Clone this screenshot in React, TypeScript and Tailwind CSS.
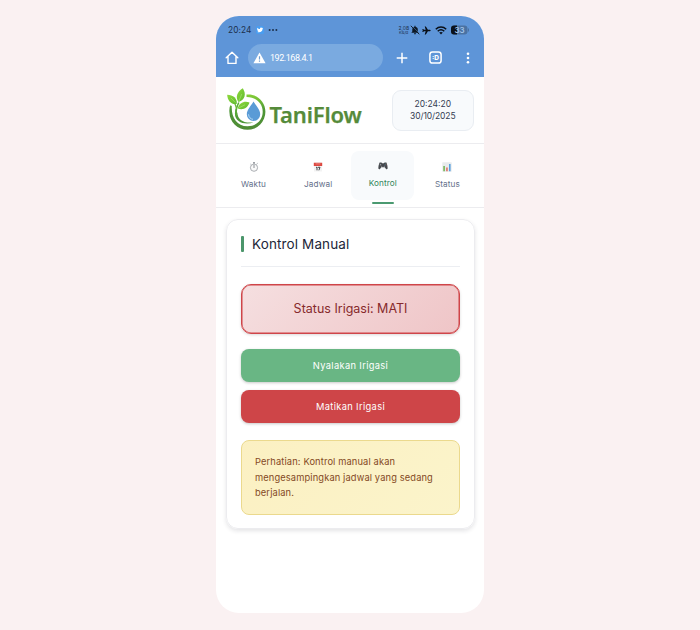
import React from "react";

const Logo = () => (
  <svg width="40" height="44" viewBox="0 0 40 44" fill="none">
    <defs>
      <linearGradient id="ring" x1="0" y1="0" x2="0" y2="1">
        <stop offset="0" stopColor="#86d038" />
        <stop offset="0.45" stopColor="#4d9637" />
        <stop offset="1" stopColor="#4f8b35" />
      </linearGradient>
      <linearGradient id="leaf" x1="0" y1="0" x2="1" y2="1">
        <stop offset="0" stopColor="#8fda3c" />
        <stop offset="1" stopColor="#5fb92f" />
      </linearGradient>
    </defs>
    <path d="M19.500 6.600C30 5.500 38.400 13.500 38.400 23.700A18 18 0 0 1 2.400 24C2.200 21.200 2.500 19 3.300 17.200L4.800 18C4.200 29 9.500 38.200 20.500 38.200C29.500 38.200 35.700 32 35.700 23.700C35.700 15.200 29 8.800 19.500 9Z" fill="url(#ring)" />
    <path d="M10.400 25C10.800 31.500 16 35.500 26.500 34.400C18.500 37.200 8 34.800 7.900 25.500L8.400 20.500Z" fill="#4f9838" />
    <path d="M9.300 28C8.500 24 9.200 19.500 11.800 14.500" stroke="#59ac35" strokeWidth="1.600" />
    <path d="M9.500 21C9 18.500 8.500 17 7.500 14.500" stroke="#69b936" strokeWidth="1.200" />
    <path d="M11.600 14C7.700 9.500 10.500 3.200 15.800 0.300C19.500 6 18 12 11.600 14Z" fill="url(#leaf)" />
    <path d="M9.700 16C4.500 17 0.400 12.700 0.200 6.800C6 7 10.600 10.500 9.700 16Z" fill="url(#leaf)" />
    <path d="M10.800 20.500C12 14.700 17.500 12.700 22.500 14.500C20.700 20 16 22.400 10.800 20.500Z" fill="url(#leaf)" />
    <path d="M11.900 13L14.800 6M8.300 14.500L4 10M12 19.800L18 16.800" stroke="#c9f0a0" strokeWidth="0.400" />
    <path d="M26.500 13.500C24.300 17.500 19.800 21.700 19.800 26.300A6.700 6.700 0 0 0 33.200 26.300C33.200 21.700 28.700 17.500 26.500 13.500Z" fill="#5a9bd6" />
    <path d="M21.500 26.300C21.800 29.300 23.600 31.100 26 31.300" stroke="#b8dcf5" strokeWidth="0.900" />
  </svg>
);

const StopwatchIcon = () => (
  <svg width="10" height="10" viewBox="0 0 10 10" fill="none">
    <circle cx="5" cy="5.700" r="3.600" fill="#fafafa" stroke="#a2a6aa" strokeWidth="0.900" />
    <path d="M5 3V6M4 0.700H6M5 0.700V2M7.600 2.200L8.500 1.400M1.600 2.200L2.200 2.700" stroke="#81878d" strokeWidth="0.900" />
  </svg>
);

const CalendarIcon = () => (
  <svg width="10" height="10" viewBox="0 0 10 10">
    <rect x="1" y="0.500" width="8" height="9" rx="0.600" fill="#f3f3f3" />
    <path d="M0.800 0.700H9.200V4H0.800Z" fill="#dc4840" />
    <path d="M2.600 1.900H7.400" stroke="#f3a29c" strokeWidth="0.700" />
    <path d="M3.100 5.500L4 5V8.300M5 5.300H7L5.900 8.300" stroke="#303438" strokeWidth="0.900" fill="none" />
  </svg>
);

const GamepadIcon = () => (
  <svg width="10" height="10" viewBox="0 0 10 10">
    <path d="M1.600 1.600H3.500L4 2.200H6L6.500 1.600H8.400C9.200 3.500 9.800 6 9.600 7.600C9.400 8.700 8.400 8.500 7.800 7.700L6.800 6.200H3.200L2.200 7.700C1.600 8.500 0.600 8.700 0.400 7.600C0.200 6 0.800 3.500 1.600 1.600Z" fill="#45484d" />
    <path d="M1.700 3.700H3.300M2.500 2.900V4.500" stroke="#b7babd" strokeWidth="0.500" />
    <circle cx="7.500" cy="3" r="0.450" fill="#61a47b" />
    <circle cx="8.300" cy="3.900" r="0.450" fill="#cf6863" />
    <circle cx="7" cy="4" r="0.450" fill="#6591d0" />
    <circle cx="3.700" cy="5.300" r="0.650" fill="#85898d" />
    <circle cx="6.300" cy="5.300" r="0.650" fill="#85898d" />
  </svg>
);

const ChartIcon = () => (
  <svg width="10" height="10" viewBox="0 0 10 10">
    <rect x="0.300" y="0.300" width="9.400" height="9.400" rx="0.400" fill="#e8ebed" />
    <path d="M1.300 4H2.900V9.200H1.300Z" fill="#76b556" />
    <path d="M4.200 5.500H5.700V9.200H4.200Z" fill="#df6a5d" />
    <path d="M7 2H8.600V9.200H7Z" fill="#5aa2e0" />
  </svg>
);

const tabs = [
  { label: "Waktu", Icon: StopwatchIcon, active: false },
  { label: "Jadwal", Icon: CalendarIcon, active: false },
  { label: "Kontrol", Icon: GamepadIcon, active: true },
  { label: "Status", Icon: ChartIcon, active: false },
];

const StatusBar = () => (
  <div className="flex h-[28px] items-center pl-[12px] pr-[15.500px] text-[#1c304c]">
    <span className="text-[8.300px] tracking-[0.100px]">20:24</span>
    <svg className="ml-[4.500px]" width="8" height="8" viewBox="0 0 8 8">
      <rect width="8" height="8" rx="1.500" fill="#4a9df0" />
      <path d="M1.200 1.800C2 2.700 2.900 3 3.900 3C3.800 1.500 5.400 1 6.200 2L7.200 1.800L6.600 2.800C6.600 5.500 4.200 7 1.100 6L2.500 5.500C1.500 5 1 3.500 1.200 1.800Z" fill="white" />
    </svg>
    <svg className="ml-[4px]" width="10" height="4" viewBox="0 0 10 4" fill="#1c304c">
      <circle cx="1.600" cy="2" r="1" />
      <circle cx="5" cy="2" r="1" />
      <circle cx="8.400" cy="2" r="1" />
    </svg>
    <div className="ml-auto flex items-center">
      <div className="flex flex-col items-center text-[5px] leading-[5px]">
        <span>2,08</span>
        <span className="text-[4px] leading-[4px]">KB/d</span>
      </div>
      <svg className="ml-[1px]" width="10" height="10" viewBox="0 0 10 10">
        <path d="M1.300 7.800L2.300 6.500V4.500C2.300 2.800 3.500 1.900 4.500 1.700V0.800H5.500V1.700C7 2 7.800 3.200 7.800 4.500V6.500L8.800 7.800ZM3.900 8.300H6.100A1.100 1.100 0 0 1 3.900 8.300Z" fill="#0d1824" />
        <path d="M1.800 0.900L9.600 8.400" stroke="#5e95d6" strokeWidth="0.500" />
        <path d="M0.800 0.800L9.300 9.300" stroke="#0d1824" strokeWidth="0.900" />
      </svg>
      <svg className="ml-[2px]" width="9" height="9" viewBox="0 0 9 9">
        <path d="M8.700 4.500C8.700 4 8.100 3.800 7.600 3.800H5.900L3.900 0.600H2.700L3.700 3.800H1.900L1.200 3H0.300L0.800 4.500L0.300 6H1.200L1.900 5.200H3.700L2.700 8.400H3.900L5.900 5.200H7.600C8.100 5.200 8.700 5 8.700 4.500Z" fill="#091019" />
      </svg>
      <svg className="ml-[4px]" width="12" height="9" viewBox="0 0 12 9" fill="none" stroke="#091019">
        <path d="M0.800 3.200C3.800 0.300 8.200 0.300 11.200 3.200M2.700 5.200C4.700 3.400 7.300 3.400 9.300 5.200" strokeWidth="1.500" />
        <path d="M4.200 6.600Q6 5.300 7.800 6.600L6 8.600Z" fill="#091019" stroke="none" />
      </svg>
      <svg className="ml-[3.500px]" width="18" height="10" viewBox="0 0 18 10">
        <rect x="0" y="0.500" width="16.500" height="9" rx="3" fill="#4a72a2" />
        <path d="M3 0.500H6V9.500H3A3 3 0 0 1 0 6.500V3.500A3 3 0 0 1 3 0.500Z" fill="#0b121b" />
        <rect x="17" y="3.500" width="1" height="3" fill="#4a72a2" />
        <text x="8.500" y="7.900" textAnchor="middle" fontSize="8" fontWeight="600" fill="#9fc1e8">33</text>
      </svg>
    </div>
  </div>
);

const BrowserBar = () => (
  <div className="flex h-[27px] items-center">
    <svg className="ml-[9px]" width="14" height="14" viewBox="0 0 14 14" fill="none" stroke="white" strokeWidth="1.400">
      <path d="M1.200 6.700L7 1.300L12.800 6.700M3 5.500V12.400H11V5.500" strokeLinejoin="round" strokeLinecap="round" />
    </svg>
    <div className="ml-[9px] flex h-[27px] w-[134.500px] items-center rounded-full bg-[#7aaae0] pl-[4.500px]">
      <svg width="13" height="12" viewBox="0 0 13 12">
        <path d="M6.500 0.500L12.600 11.200H0.400Z" fill="white" />
        <path d="M6.500 4.300V7.500M6.500 8.600V9.800" stroke="#719fd2" strokeWidth="1.200" />
      </svg>
      <span className="ml-[4.500px] pt-[2px] font-['Roboto',sans-serif] text-[9px] tracking-[-0.450px] text-white">192.168.4.1</span>
    </div>
    <svg className="ml-[13px]" width="12" height="12" viewBox="0 0 12 12" stroke="white" strokeWidth="1.500">
      <path d="M6 0.700V11.300M0.700 6H11.300" />
    </svg>
    <svg className="ml-[21.500px]" width="13" height="13" viewBox="0 0 13 13">
      <rect x="0.900" y="0.900" width="11.200" height="11.200" rx="2.600" fill="none" stroke="white" strokeWidth="1.500" />
      <text x="6.400" y="8.800" textAnchor="middle" fill="white" fontSize="6.500" fontWeight="800">:D</text>
    </svg>
    <svg className="ml-[24px]" width="4" height="12" viewBox="0 0 4 12" fill="white">
      <circle cx="2" cy="1.700" r="1.300" />
      <circle cx="2" cy="6" r="1.300" />
      <circle cx="2" cy="10.300" r="1.300" />
    </svg>
  </div>
);

export default function App() {
  return (
    <main className="flex h-[630px] w-[700px] overflow-hidden bg-[#faf1f2] pl-[216px] pt-[16px] font-['Inter',sans-serif]">
      <div className="h-[597px] w-[268px] overflow-hidden rounded-[23px] bg-white">
        <div className="h-[61px] bg-[#5e95d8]">
          <StatusBar />
          <BrowserBar />
        </div>

        <header className="flex h-[67px] items-center border-b border-[#ececef] pl-[11px] pr-[10px]">
          <Logo />
          <span className="ml-[2.500px] pt-[7px] font-['Noto_Sans',sans-serif] text-[22px] font-semibold leading-none tracking-[-0.150px] text-[#558b3a] [-webkit-text-stroke:0.250px_#558b3a]">
            TaniFlow
          </span>
          <div className="ml-auto flex h-[41px] w-[82.500px] flex-col items-center justify-center rounded-[9px] border border-[#e9edf2] bg-[#f8fafc] pt-[1px] text-[8.500px] leading-[11.500px] text-[#343c52]">
            <span>20:24:20</span>
            <span className="tracking-[-0.100px]">30/10/2025</span>
          </div>
        </header>

        <nav className="flex h-[64px] justify-between border-b border-[#ececef] pl-[6px] pr-[5px] pt-[7px]">
          {tabs.map(({ label, Icon, active }) => (
            <div key={label} className="flex w-[63px] flex-col items-center">
              <div className={active ? "flex h-[49px] w-full flex-col items-center rounded-[8px] bg-[#f8fafc] pt-[10px] text-[#2f855a]" : "flex h-[49px] w-full flex-col items-center pt-[11px] text-[#64708a]"}>
                <Icon />
                <span className="mt-[6px] text-[8.200px] leading-[12px] tracking-[0.100px]">{label}</span>
              </div>
              {active && <div className="mt-[2px] h-[2px] w-[22px] rounded-full bg-[#4b9a71]" />}
            </div>
          ))}
        </nav>

        <section className="ml-[10px] mr-[9px] mt-[11px] h-[310px] rounded-[12px] border border-[#ececef] px-[14px] pt-[15px] shadow-[0_2px_4px_rgba(30,35,50,0.120)]">
          <div className="flex h-[32px] items-start border-b border-[#eceef2]">
            <div className="mt-[1px] h-[16px] w-[3px] rounded-[1px] bg-[#4b966b]" />
            <h1 className="ml-[8px] text-[13.500px] leading-[18px] tracking-[0.130px] text-[#1d2739]">Kontrol Manual</h1>
          </div>
          <div className="mt-[16.500px] flex h-[50px] items-center justify-center rounded-[10px] border border-[#cf4549] bg-[linear-gradient(135deg,#f5dfe0,#efc5c7)] pt-[1px] text-[12.500px] text-[#862a2c] shadow-[inset_0_0_0_0.500px_#cf4549,0_1px_3px_rgba(0,0,0,0.150)]">
            Status Irigasi: MATI
          </div>
          <button className="mt-[15.500px] flex h-[33px] w-full items-center justify-center rounded-[8px] bg-[#69b684] pt-[1px] text-[9.300px] tracking-[0.350px] text-white shadow-[0_1px_3px_rgba(0,0,0,0.220)]">
            Nyalakan Irigasi
          </button>
          <button className="mt-[8px] flex h-[33px] w-full items-center justify-center rounded-[8px] bg-[#ce4548] pt-[1px] text-[9.300px] tracking-[0.350px] text-white shadow-[0_1px_3px_rgba(0,0,0,0.220)]">
            Matikan Irigasi
          </button>
          <p className="mt-[16.500px] h-[75px] rounded-[8px] border border-[#ebd98d] bg-[linear-gradient(135deg,#fbf0c2,#fbf4cb)] px-[13px] pt-[13.500px] text-[9.300px] leading-[15.500px] tracking-[0.130px] text-[#84491f]">
            Perhatian: Kontrol manual akan
            <br />
            mengesampingkan jadwal yang sedang
            <br />
            berjalan.
          </p>
        </section>
      </div>
    </main>
  );
}
